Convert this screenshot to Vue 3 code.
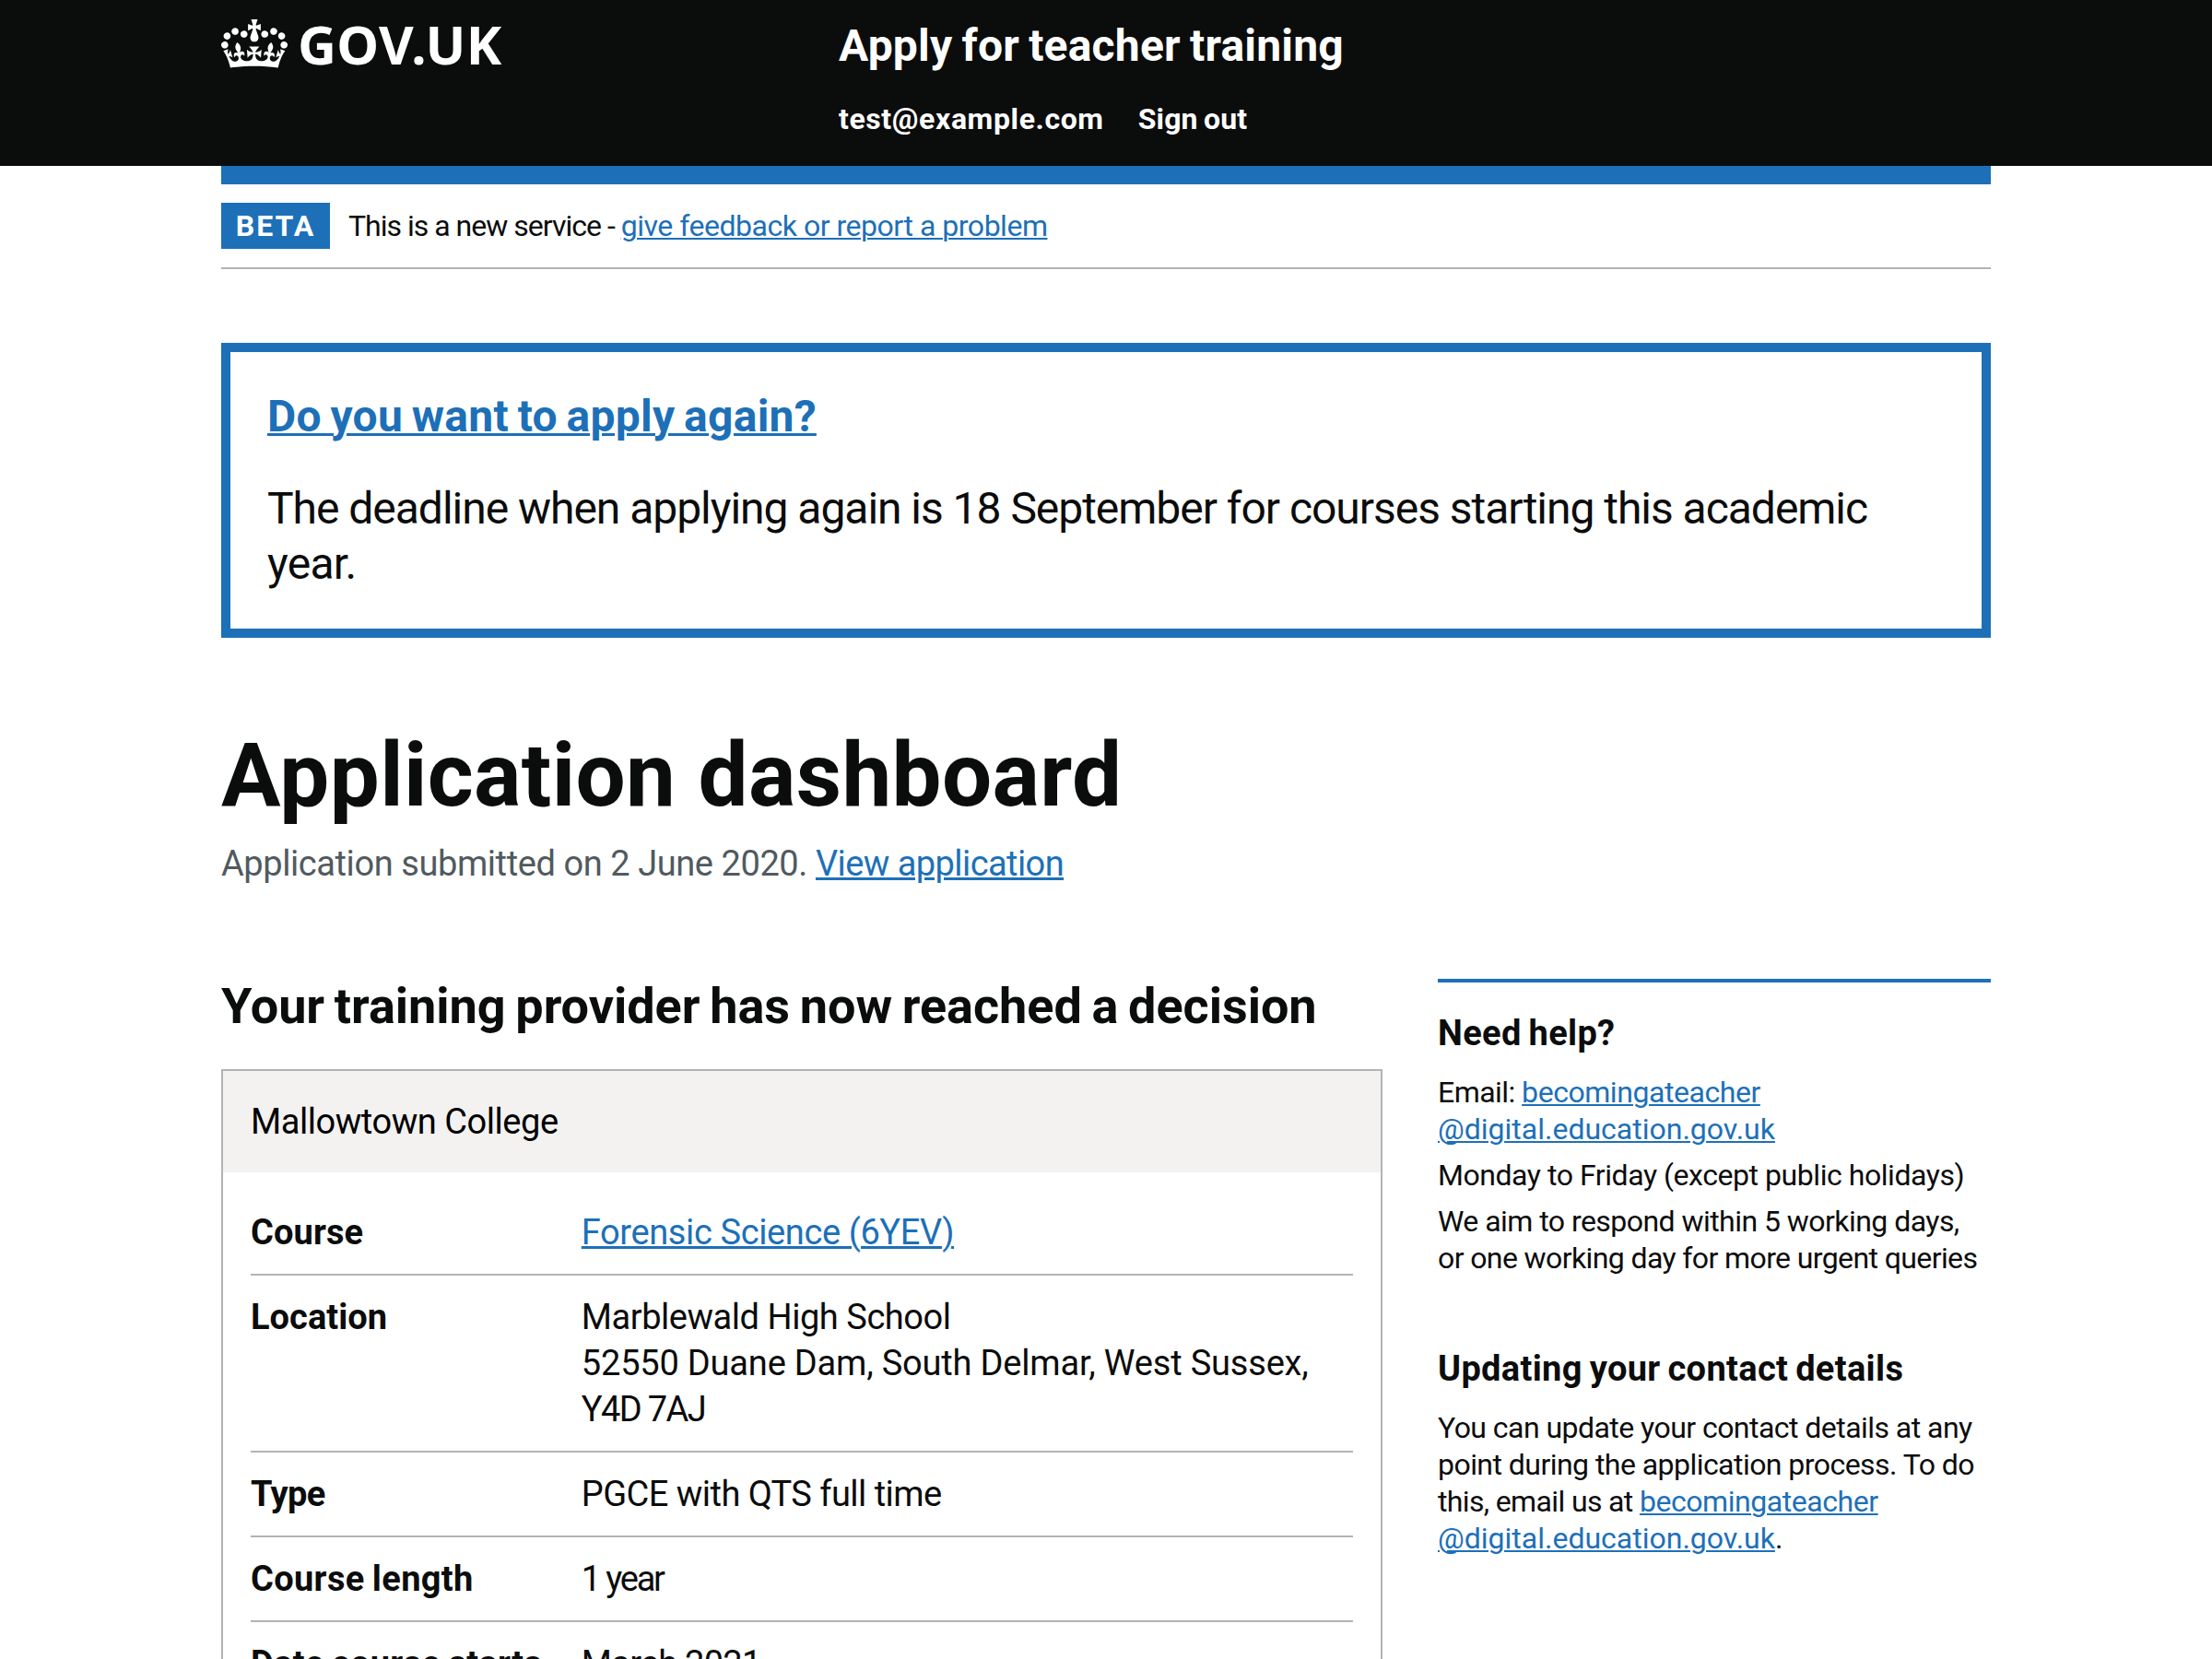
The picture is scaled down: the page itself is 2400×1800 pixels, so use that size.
<script setup>
// Tracking values are thousandths of an em.
const track = (n) => ({ letterSpacing: n / 1000 + 'em' })

const rows = [
  { key: 'Course', kt: 3, lines: [['Forensic Science (6YEV)', -10]], link: true },
  {
    key: 'Location',
    kt: 1,
    lines: [
      ['Marblewald High School', -12],
      ['52550 Duane Dam, South Delmar, West Sussex,', -5],
      ['Y4D 7AJ', -43]
    ]
  },
  { key: 'Type', kt: -16, lines: [['PGCE with QTS full time', -14]] },
  { key: 'Course length', kt: 9, lines: [['1 year', -58]] },
  { key: 'Date course starts', kt: 8, lines: [['March 2021', -19]] }
]
</script>

<template>
  <div class="page">
    <header class="header">
      <div class="container header-inner">
        <a class="logo">
          <svg class="crown" viewBox="0 0 132 97" fill="currentColor" aria-hidden="true">
            <path fill-rule="evenodd" d="M25 30.2c3.5 1.5 7.7-.2 9.1-3.7 1.5-3.6-.2-7.8-3.9-9.2-3.6-1.4-7.6.3-9.1 3.9-1.4 3.5.3 7.5 3.9 9zM9 39.5c3.6 1.5 7.8-.2 9.2-3.7 1.5-3.6-.2-7.8-3.9-9.1-3.6-1.5-7.6.2-9.1 3.8-1.4 3.5.3 7.5 3.8 9zM4.4 57.2c3.5 1.5 7.7-.2 9.1-3.8 1.5-3.6-.2-7.7-3.9-9.1-3.5-1.5-7.6.3-9.1 3.8-1.4 3.5.3 7.6 3.9 9.1zm38.3-21.4c3.5 1.5 7.7-.2 9.1-3.8 1.5-3.6-.2-7.7-3.9-9.1-3.6-1.5-7.6.3-9.1 3.8-1.3 3.6.4 7.7 3.9 9.1zm64.4-5.6c-3.6 1.5-7.8-.2-9.1-3.7-1.5-3.6.2-7.8 3.8-9.2 3.6-1.4 7.7.3 9.2 3.9 1.3 3.5-.4 7.5-3.9 9zm15.9 9.3c-3.6 1.5-7.7-.2-9.1-3.7-1.5-3.6.2-7.8 3.7-9.1 3.6-1.5 7.7.2 9.2 3.8 1.5 3.5-.3 7.5-3.8 9zm4.7 17.7c-3.6 1.5-7.8-.2-9.2-3.8-1.5-3.6.2-7.7 3.9-9.1 3.6-1.5 7.7.3 9.2 3.8 1.3 3.5-.4 7.6-3.9 9.1zM89.3 35.8c-3.6 1.5-7.8-.2-9.2-3.8-1.4-3.6.2-7.7 3.9-9.1 3.6-1.5 7.7.3 9.2 3.8 1.4 3.6-.3 7.7-3.9 9.1zM69.7 17.7l8.9 4.7V9.3l-8.9 2.8c-.2-.3-.5-.6-.9-.9L72.4 0H59.6l3.5 11.2c-.3.3-.6.5-.9.9l-8.8-2.8v13.1l8.8-4.7c.3.3.6.7.9.9l-5 15.4v.1c-.2.8-.4 1.6-.4 2.4 0 4.1 3.1 7.5 7 8.1h.2c.3 0 .7.1 1 .1.4 0 .7 0 1-.1h.2c4-.6 7.1-4.1 7.1-8.1 0-.8-.1-1.7-.4-2.4V34l-5.1-15.4c.4-.2.7-.6 1-.9zM66 92.8c16.9 0 32.8 1.1 47.1 3.2 4-16.9 8.9-26.7 14-33.5l-9.6-3.4c1 4.9 1.1 7.2 0 10.2-1.5-1.4-3-4.3-4.2-8.7L108.6 76c2.8-2 5-3.2 7.5-3.3-4.4 9.4-10 11.9-13.6 11.2-4.3-.8-6.3-4.6-5.6-7.9 1-4.7 5.7-5.9 8-.5 4.3-8.7-3-11.4-7.6-8.8 7.1-7.2 7.9-13.5 2.1-21.1-8 6.1-8.1 12.3-4.5 20.8-4.7-5.4-12.1-2.5-9.5 6.2 3.4-5.2 7.9-2 7.2 3.1-.6 4.3-6.4 7.8-13.5 7.2-10.3-.9-10.9-8-11.2-13.8 2.5-.5 7.1 1.8 11 7.3L80.2 60c-4.1 4.4-8 5.3-12.3 5.4 1.4-4.4 8-11.6 8-11.6H55.5s6.4 7.2 7.9 11.6c-4.2-.1-8-1-12.3-5.4l1.4 16.4c3.9-5.5 8.5-7.7 10.9-7.3-.3 5.8-.9 12.8-11.1 13.8-7.2.6-12.9-2.9-13.5-7.2-.7-5 3.8-8.3 7.1-3.1 2.7-8.7-4.6-11.6-9.4-6.2 3.7-8.5 3.6-14.7-4.6-20.8-5.8 7.6-5 13.9 2.2 21.1-4.7-2.6-11.9.1-7.7 8.8 2.3-5.5 7.1-4.2 8.1.5.7 3.3-1.3 7.1-5.7 7.9-3.5.7-9-1.8-13.5-11.2 2.5.1 4.7 1.3 7.5 3.3l-4.7-15.4c-1.2 4.4-2.7 7.2-4.3 8.7-1.1-3-.9-5.3 0-10.2l-9.5 3.4c5 6.9 9.9 16.7 14 33.5 14.8-2.1 30.8-3.2 47.7-3.2z" />
          </svg>
          <span class="logotype">GOV.UK</span>
        </a>
        <div class="header-content">
          <a class="service">Apply for teacher training</a>
          <nav class="nav">
            <a :style="track(19)">test@example.com</a>
            <a :style="track(5)">Sign out</a>
          </nav>
        </div>
      </div>
    </header>

    <div class="container">
      <div class="bar"></div>
      <div class="phase">
        <strong class="tag">BETA</strong>
        <span class="small" :style="track(-31)">This is a new service - <a class="link" :style="track(-15)">give feedback or report a problem</a></span>
      </div>

      <section class="banner">
        <h2><a class="link">Do you want to apply again?</a></h2>
        <p>The deadline when applying again is 18 September for courses starting this academic <span :style="track(-15)">year.</span></p>
      </section>

      <h1>Application dashboard</h1>
      <p class="submitted"><span :style="track(-11)">Application submitted on 2 June 2020. </span><a class="link" :style="track(-15)">View application</a></p>

      <div class="columns">
        <main class="main">
          <h2 class="decision">Your training provider has now reached a decision</h2>
          <section class="card">
            <header class="card-head">Mallowtown College</header>
            <dl class="summary">
              <div v-for="row in rows" :key="row.key" class="row">
                <dt :style="track(row.kt)">{{ row.key }}</dt>
                <dd>
                  <div v-for="[text, t] in row.lines" :key="text" :style="track(t)">
                    <a v-if="row.link" class="link">{{ text }}</a>
                    <template v-else>{{ text }}</template>
                  </div>
                </dd>
              </div>
            </dl>
          </section>
        </main>

        <aside class="aside">
          <h2 class="side-title">Need help?</h2>
          <p>
            Email: <a class="link"><span :style="track(-14)">becomingateacher</span><br /><span :style="track(0)">@digital.education.gov.uk</span></a>
          </p>
          <p :style="track(-14)">Monday to Friday (except public holidays)</p>
          <p class="last">We aim to respond within 5 working days,<br /><span :style="track(-19)">or one working day for more urgent queries</span></p>
          <h2 class="side-title" :style="track(9)">Updating your contact details</h2>
          <p>
            You can update your contact details at any<br />
            point during the application process. To do<br />
            <span :style="track(-20)">this, email us at </span><a class="link"><span :style="track(-14)">becomingateacher</span><br /><span :style="track(0)">@digital.education.gov.uk</span></a>.
          </p>
        </aside>
      </div>
    </div>
  </div>
</template>

<style>
html,
body {
  overflow: hidden;
}
</style>

<style scoped>
.page {
  height: 1800px;
  overflow: hidden;
  background: #fff;
  color: #0b0c0c;
  font-family: Roboto, "Liberation Sans", sans-serif;
  font-size: 38px;
  line-height: 50px;
}
h1, h2, p, dl, dd { margin: 0; }
.container {
  width: 1920px;
  margin: 0 auto;
}
.link {
  color: #1d70b8;
  text-decoration: underline;
  text-decoration-thickness: 2px;
  text-underline-offset: 2px;
}
.header {
  height: 180px;
  background: #0b0c0c;
  color: #fff;
}
.header-inner { display: flex; }
.logo {
  display: flex;
  width: 670px;
  padding-top: 21px;
  gap: 11px;
}
.crown {
  width: 72px;
  height: 53px;
}
.logotype {
  margin-top: -2px;
  font: 700 58px/58px "Noto Sans", sans-serif;
  letter-spacing: 0.006em;
}
.header-content {
  padding-top: 20px;
  font-weight: 700;
  word-spacing: -0.05em;
}
.service {
  display: block;
  font-size: 48px;
  line-height: 60px;
  letter-spacing: 0.004em;
}
.nav {
  display: flex;
  gap: 37px;
  margin-top: 29px;
  font-size: 32px;
  line-height: 40px;
}
.bar {
  height: 20px;
  background: #1d70b8;
}
.phase {
  display: flex;
  align-items: center;
  gap: 20px;
  padding: 20px 0;
  border-bottom: 2px solid #b1b4b6;
}
.tag {
  width: 118px;
  background: #1d70b8;
  color: #fff;
  font-size: 32px;
  line-height: 50px;
  letter-spacing: 2px;
  text-align: center;
}
.small {
  font-size: 32px;
  line-height: 50px;
}
.banner {
  margin-top: 80px;
  padding: 40px;
  border: 10px solid #1d70b8;
  font-size: 48px;
  line-height: 60px;
}
.banner h2 {
  margin-bottom: 40px;
  font-size: 48px;
  letter-spacing: 0.005em;
  word-spacing: -0.05em;
}
.banner h2 .link { text-decoration-thickness: 3px; }
.banner p { letter-spacing: -0.0215em; }
h1 {
  margin-top: 99px;
  font-size: 96px;
  line-height: 100px;
  letter-spacing: 0.004em;
}
.submitted {
  margin-top: 21px;
  color: #505a5f;
}
.submitted .link,
.row .link { text-decoration-thickness: 2.5px; }
.columns {
  display: flex;
  gap: 60px;
  margin-top: 100px;
}
.main { width: 1260px; }
.decision {
  margin-bottom: 38px;
  font-size: 54px;
  line-height: 60px;
  letter-spacing: -0.0005em;
  word-spacing: -0.05em;
}
.card { border: 2px solid #b1b4b6; }
.card-head {
  padding: 30px;
  background: #f3f2f1;
  color: #000;
  letter-spacing: -0.012em;
}
.summary { padding: 20px 30px; }
.row {
  display: flex;
  padding: 20px 0;
  border-bottom: 2px solid #b1b4b6;
}
.row dt {
  width: 30%;
  font-weight: 700;
  word-spacing: -0.04em;
}
.row dd { flex: 1; }
.aside {
  width: 600px;
  box-sizing: border-box;
  padding-top: 30px;
  border-top: 4px solid #1d70b8;
  font-size: 32px;
  line-height: 40px;
  letter-spacing: -0.017em;
}
.side-title {
  margin-bottom: 19px;
  font-size: 38px;
  line-height: 50px;
  letter-spacing: 0.009em;
  word-spacing: -0.05em;
}
.aside p { margin-bottom: 10px; }
.aside .last { margin-bottom: 75px; }
</style>
